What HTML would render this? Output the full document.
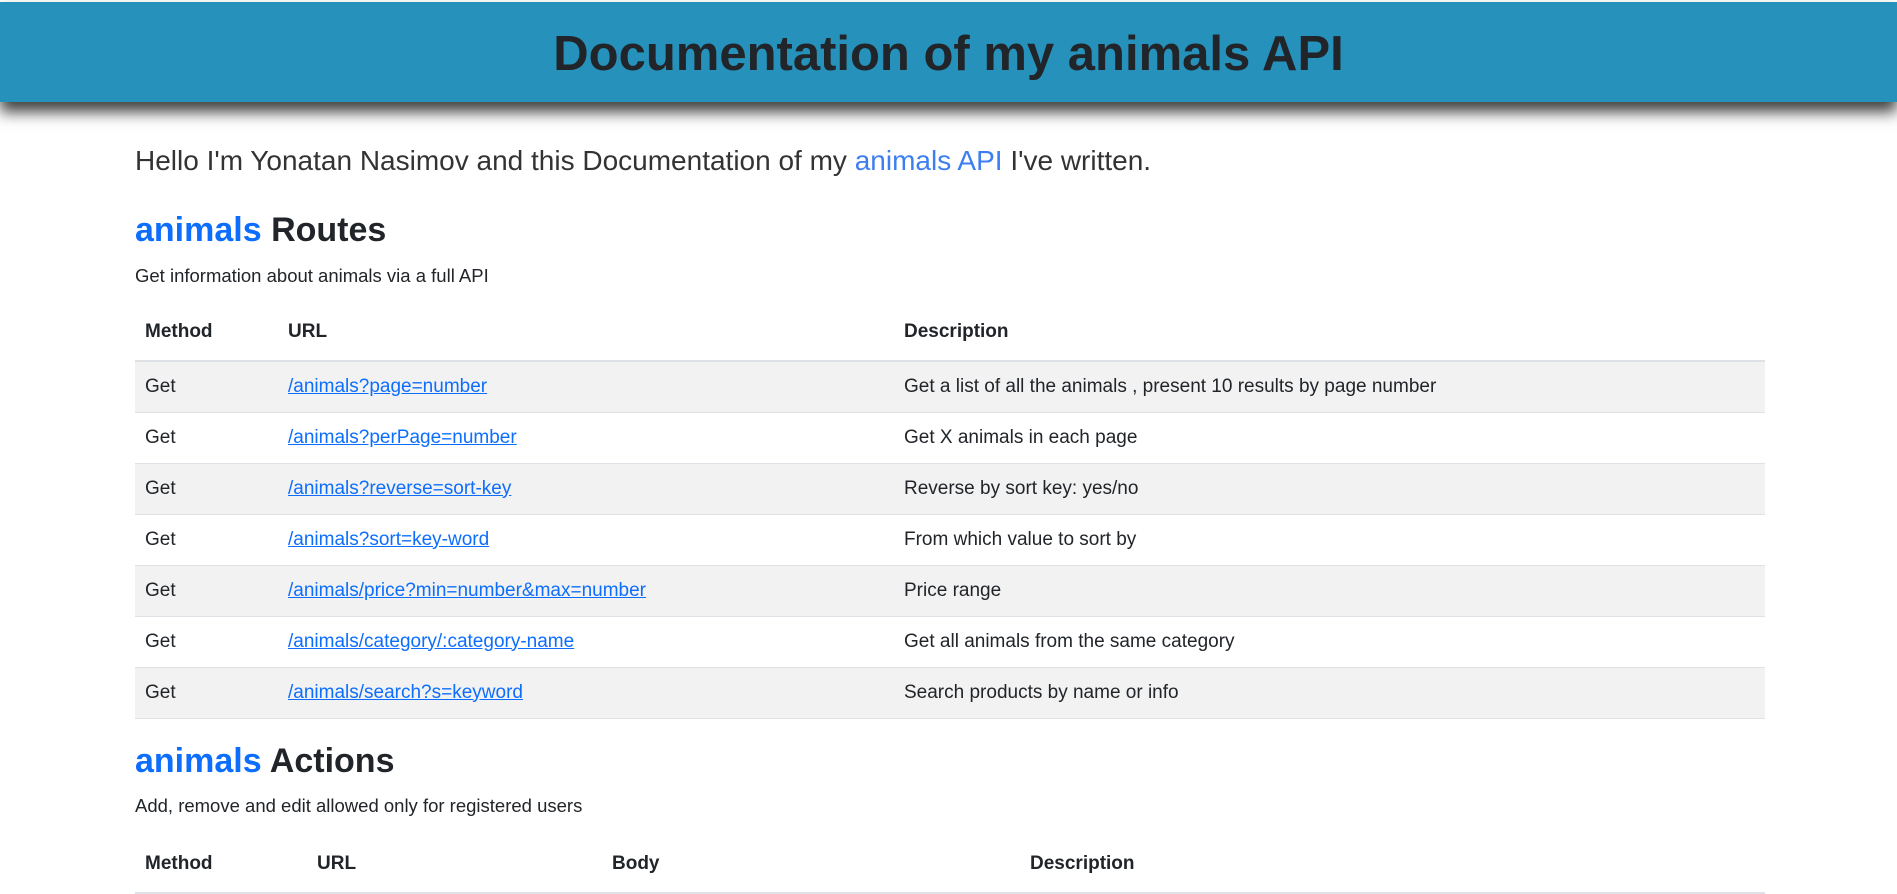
<!DOCTYPE html>
<html><head><meta charset="utf-8"><style>
*{margin:0;padding:0;box-sizing:border-box}
body{width:1897px;height:892px;overflow:hidden;background:#fff;font-family:"Liberation Sans",sans-serif;color:#212529;position:relative}
.hdr{position:absolute;left:0;top:2px;width:1897px;height:100px;background:#2692bc;box-shadow:0 10px 14px rgba(0,0,0,.75);text-align:center}
.hdr h1{font-size:49px;font-weight:bold;line-height:104px;color:#212529}
.a{position:absolute;left:135px;white-space:nowrap}
.lead{font-size:28px;font-weight:300;color:#333;}
.blue{color:#0d6efd}
.lead .blue{color:#3d7ef0}
h2{font-size:34px;font-weight:bold}
.sub{font-size:18.5px}
table{position:absolute;left:135px;width:1630px;border-collapse:collapse;font-size:19px}
td,th{height:51px;padding:0 10px;text-align:left;vertical-align:middle;border-bottom:1.5px solid #dee2e6;white-space:nowrap}
th{font-weight:bold;height:58px;border-bottom:2px solid #dee2e6}
tr.s td{background:#f2f2f2}
td a{color:#0d6efd;text-decoration:underline}
</style></head><body>
<div class="hdr"><h1>Documentation of my animals API</h1></div>
<div class="a lead" style="top:145px">Hello I'm Yonatan Nasimov and this Documentation of my <span class="blue">animals API</span> I've written.</div>
<h2 class="a" style="top:211px"><span class="blue">animals</span> Routes</h2>
<div class="a sub" style="top:265px">Get information about animals via a full API</div>
<table style="top:303px">
<colgroup><col style="width:143px"><col style="width:616px"><col></colgroup>
<tr><th>Method</th><th>URL</th><th>Description</th></tr>
<tr class="s"><td>Get</td><td><a>/animals?page=number</a></td><td>Get a list of all the animals , present 10 results by page number</td></tr>
<tr><td>Get</td><td><a>/animals?perPage=number</a></td><td>Get X animals in each page</td></tr>
<tr class="s"><td>Get</td><td><a>/animals?reverse=sort-key</a></td><td>Reverse by sort key: yes/no</td></tr>
<tr><td>Get</td><td><a>/animals?sort=key-word</a></td><td>From which value to sort by</td></tr>
<tr class="s"><td>Get</td><td><a>/animals/price?min=number&amp;max=number</a></td><td>Price range</td></tr>
<tr><td>Get</td><td><a>/animals/category/:category-name</a></td><td>Get all animals from the same category</td></tr>
<tr class="s"><td>Get</td><td><a>/animals/search?s=keyword</a></td><td>Search products by name or info</td></tr>
</table>
<h2 class="a" style="top:742px"><span class="blue">animals</span> Actions</h2>
<div class="a sub" style="top:795px">Add, remove and edit allowed only for registered users</div>
<table style="top:835px">
<colgroup><col style="width:172px"><col style="width:295px"><col style="width:418px"><col></colgroup>
<tr><th>Method</th><th>URL</th><th>Body</th><th>Description</th></tr>
</table>
</body></html>
